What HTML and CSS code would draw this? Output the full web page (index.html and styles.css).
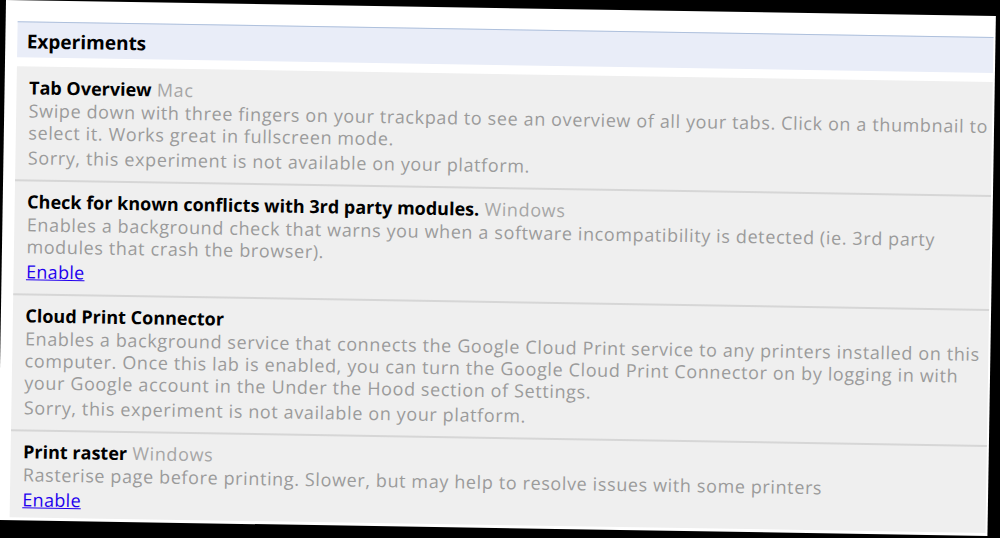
FILE: index.html
```html
<!DOCTYPE html>
<html>
<head>
<meta charset="utf-8">
<link rel="stylesheet" href="styles.css">
</head>
<body>
<div class="panel">
  <div class="header">Experiments</div>
  <div class="list">
    <div class="item">
      <div class="title"><b>Tab Overview</b> <span class="platform">Mac</span></div>
      <div class="desc">Swipe down with three fingers on your trackpad to see an overview of all your tabs. Click on a thumbnail to select it. Works great in fullscreen mode.</div>
      <div class="note">Sorry, this experiment is not available on your platform.</div>
    </div>
    <div class="item">
      <div class="title"><b>Check for known conflicts with 3rd party modules.</b> <span class="platform">Windows</span></div>
      <div class="desc">Enables a background check that warns you when a software incompatibility is detected (ie. 3rd party modules that crash the browser).</div>
      <div class="note"><a href="#" class="link">Enable</a></div>
    </div>
    <div class="item">
      <div class="title"><b>Cloud Print Connector</b></div>
      <div class="desc">Enables a background service that connects the Google Cloud Print service to any printers installed on this computer. Once this lab is enabled, you can turn the Google Cloud Print Connector on by logging in with your Google account in the Under the Hood section of Settings.</div>
      <div class="note">Sorry, this experiment is not available on your platform.</div>
    </div>
    <div class="item last">
      <div class="title"><b>Print raster</b> <span class="platform">Windows</span></div>
      <div class="desc">Rasterise page before printing. Slower, but may help to resolve issues with some printers</div>
      <div class="note"><a href="#" class="link">Enable</a></div>
    </div>
  </div>
</div>
</body>
</html>
```
FILE: styles.css
```css
html, body {
  margin: 0;
  padding: 0;
  background: #000;
  width: 1000px;
  height: 538px;
  overflow: hidden;
}
.panel {
  width: 976px;
  margin-left: 5.5px;
  padding: 21px 2px 3px 11.5px;
  background: #fff;
  transform: rotate(0.93deg);
  transform-origin: 0 0;
  font-family: "Open Sans", "Noto Sans", sans-serif;
  font-size: 18px;
}
.header {
  border-top: 1px solid #aec0dc;
  background: #e9edf8;
  padding: 3px 10px 0;
  line-height: 32px;
  font-weight: bold;
  font-size: 19px;
  color: #000;
}
.list {
  margin-top: 9px;
  background: #efefef;
}
.item {
  padding: 9px 0 11px 13px;
  border-top: 2px solid #d6d6d6;
  line-height: 22px;
  color: #9b9b9b;
  letter-spacing: 0.62px;
}
.item:first-child {
  border-top: none;
  padding-top: 10px;
}
.item.last {
  padding-bottom: 7px;
}
.title {
  color: #000;
}
.title b {
  font-weight: bold;
  letter-spacing: 0;
}
.platform {
  color: #a6a6a6;
}
.desc {
  margin-top: 1px;
}
.note {
  margin-top: 3px;
}
.link {
  color: #2200ee;
  text-decoration: underline;
  letter-spacing: 0.3px;
}
```
